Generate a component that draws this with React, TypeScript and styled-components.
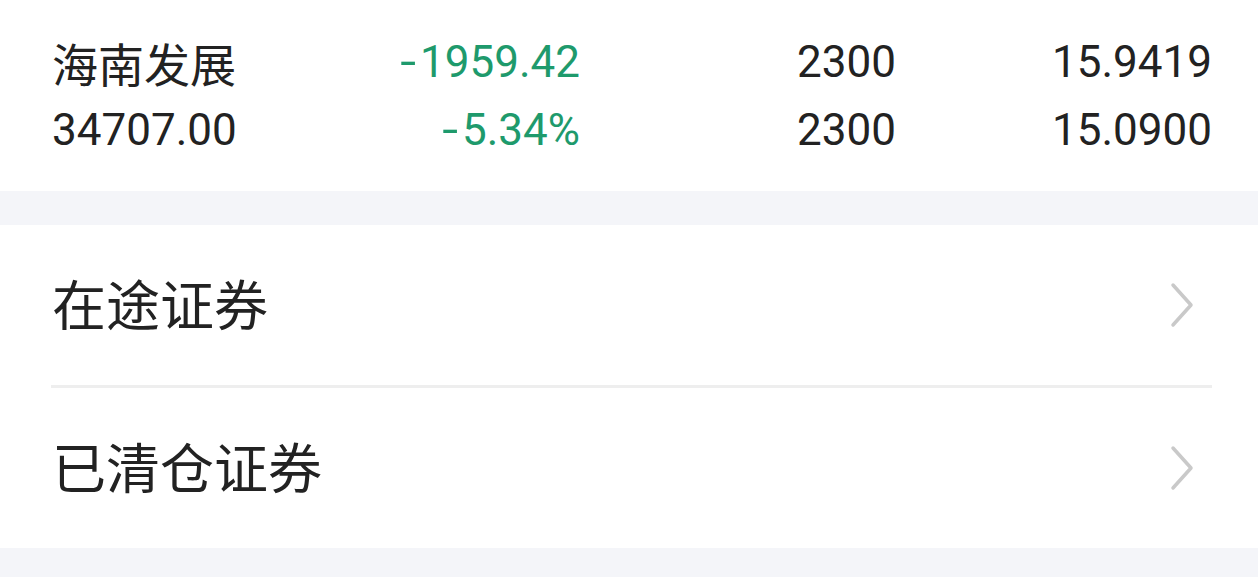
import styled, { createGlobalStyle } from "styled-components";

const GlobalStyle = createGlobalStyle`
  html, body {
    margin: 0;
    padding: 0;
    background: #f4f5f9;
  }
  body {
    font-family: Roboto, "Noto Sans CJK SC", sans-serif;
    color: #222222;
  }
`;

const Page = styled.div`
  display: flex;
  flex-direction: column;
  row-gap: 34px;
  min-height: 577px;
  background: #f4f5f9;
`;

const HoldingCard = styled.section`
  background: #fff;
  padding: 28px 46px 27px 52px;
`;

const HoldingRow = styled.div`
  display: grid;
  grid-template-columns: 212px repeat(3, 1fr);
  height: 68px;
  align-items: center;
  font-size: 44px;
`;

const Cell = styled.span<{ $green?: boolean; $left?: boolean; $cjk?: boolean }>`
  text-align: ${(p) => (p.$left ? "left" : "right")};
  color: ${(p) => (p.$green ? "#1e9a6c" : "#222222")};
  font-size: ${(p) => (p.$cjk ? "46px" : "inherit")};
  white-space: nowrap;
`;

const Sign = styled.span`
  display: inline-block;
  transform: scaleX(1.3);
  margin-right: 6px;
`;

const MenuCard = styled.section`
  background: #fff;
  display: flex;
  flex-direction: column;
`;

const MenuItem = styled.div`
  display: flex;
  align-items: center;
  justify-content: space-between;
  height: 160px;
  padding: 0 46px 0 52px;
  font-size: 54px;
  color: #222222;
`;

const Label = styled.span`
  margin-top: -5px;
`;

const Divider = styled.div`
  height: 3px;
  margin: 0 46px 0 51px;
  background: #eeeeee;
`;

const Chevron = () => (
  <svg width="24" height="46" viewBox="0 0 24 46" style={{ marginRight: 18 }}>
    <polyline
      points="3,3 21,23 3,43"
      fill="none"
      stroke="#c9c9c9"
      strokeWidth="3.5"
      strokeLinecap="round"
      strokeLinejoin="round"
    />
  </svg>
);

const rows = [
  ["海南发展", "1959.42", "2300", "15.9419"],
  ["34707.00", "5.34%", "2300", "15.0900"],
];

export default function App() {
  return (
    <>
      <GlobalStyle />
      <Page>
        <HoldingCard>
          {rows.map((r, i) => (
            <HoldingRow key={i}>
              <Cell $left $cjk={i === 0}>
                {r[0]}
              </Cell>
              <Cell $green>
                <Sign>-</Sign>
                {r[1]}
              </Cell>
              <Cell>{r[2]}</Cell>
              <Cell>{r[3]}</Cell>
            </HoldingRow>
          ))}
        </HoldingCard>
        <MenuCard>
          <MenuItem>
            <Label>在途证券</Label>
            <Chevron />
          </MenuItem>
          <Divider />
          <MenuItem>
            <Label>已清仓证券</Label>
            <Chevron />
          </MenuItem>
        </MenuCard>
      </Page>
    </>
  );
}
